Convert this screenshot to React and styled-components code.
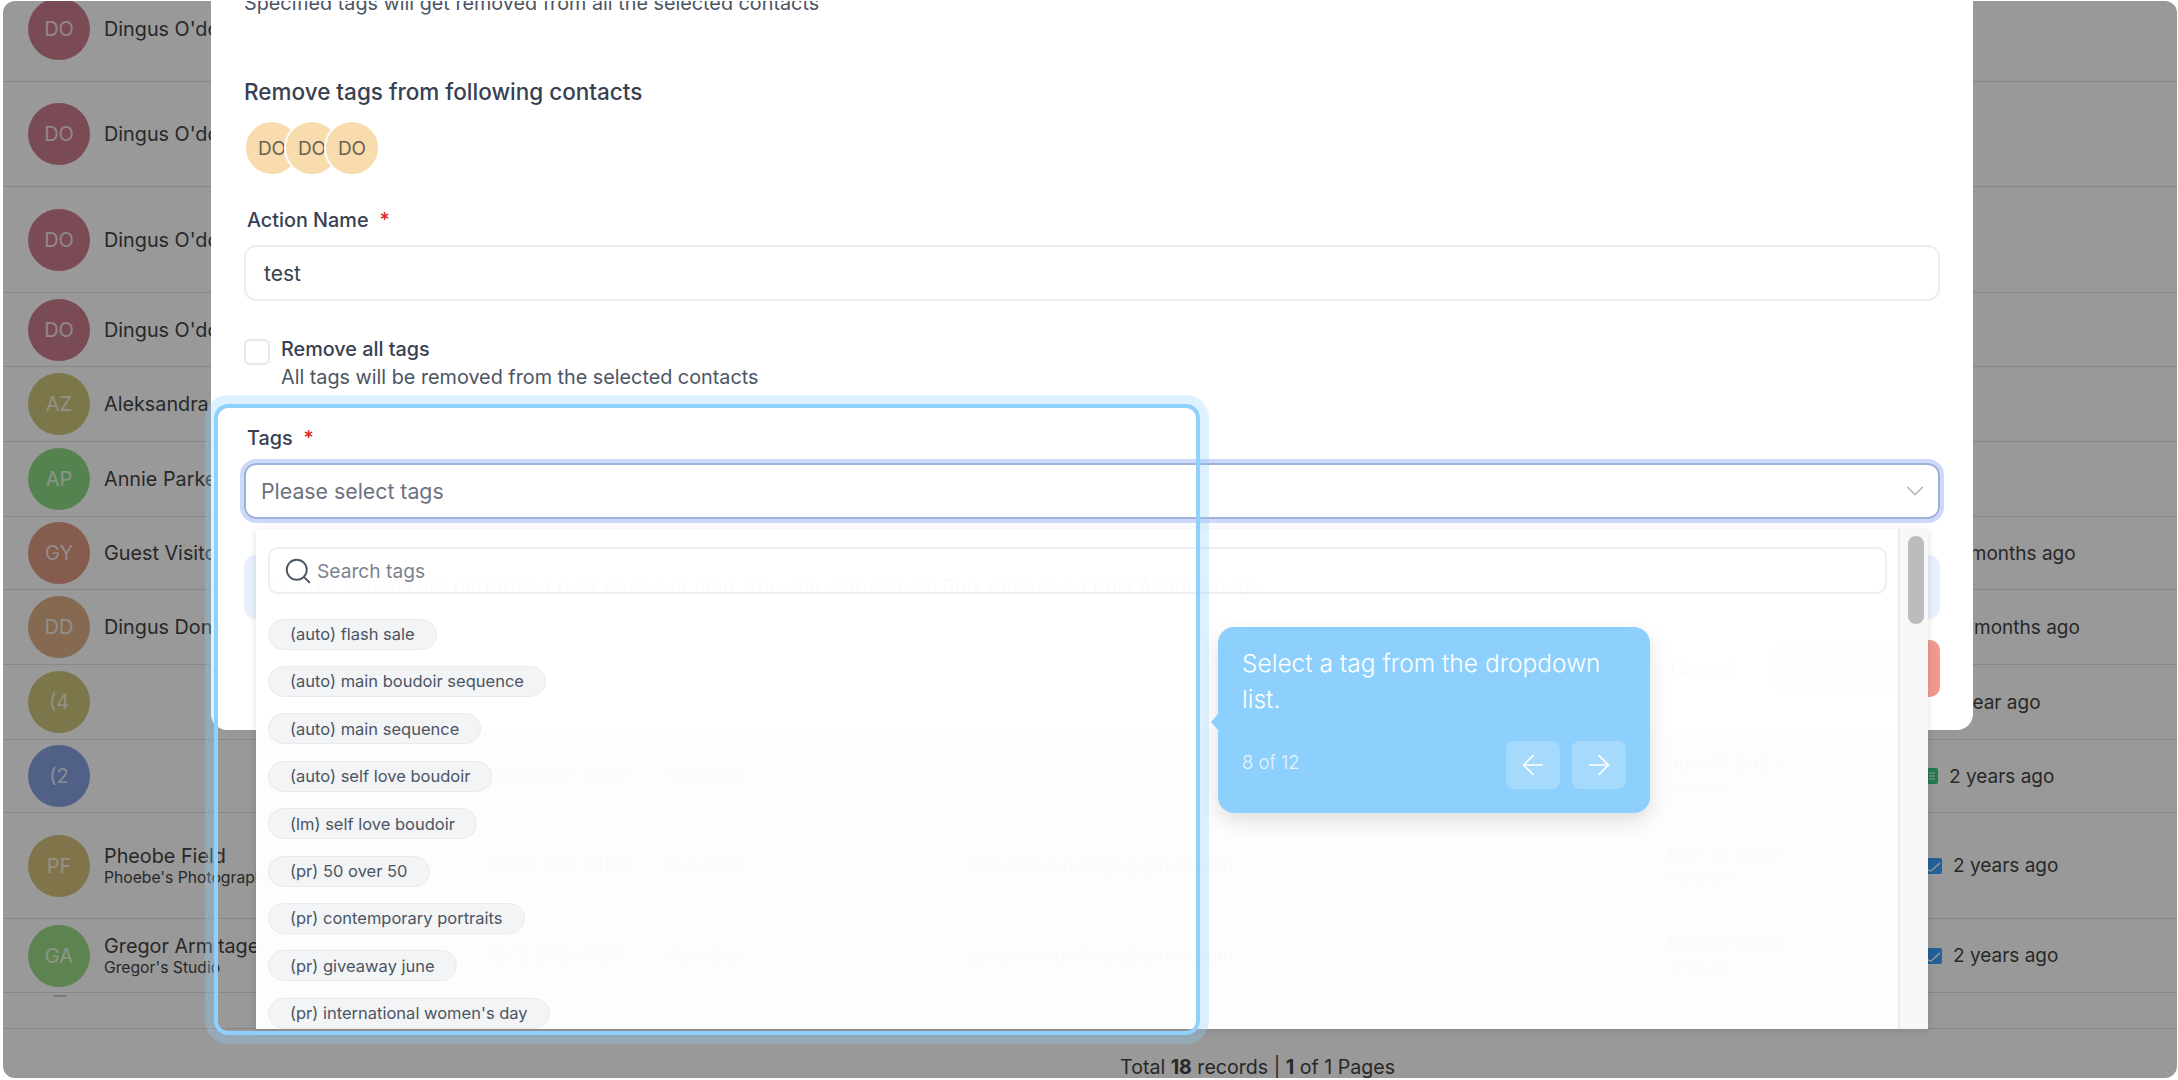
import React from 'react';
import styled, { createGlobalStyle } from 'styled-components';
import { ArrowLeft, ArrowRight, ChevronDown, Info, Search } from 'lucide-react';

const GlobalStyle = createGlobalStyle`
    html, body {
        margin: 0;
        padding: 0;
        background: #fff;
        font-family: Inter, "Liberation Sans", sans-serif;
    }
    * { box-sizing: border-box; }
`;

const Frame = styled.div`
    position: relative;
    margin: 1px 1px 2px 3px;
    height: 1077px;
    overflow: hidden;
    border-radius: 12px;
    background: #fff;
`;

// the table is scrolled a bit, first row is cut by the top of the window
const Table = styled.div`
    margin-top: -25px;
`;

const Row = styled.div`
    display: grid;
    grid-template-columns: 459px 180px 301px 700px 258px 1fr;
    align-items: center;
    height: ${p => p.$height}px;
    padding-left: 25px;
    border-bottom: 1px solid #e2e2e2;
    color: #444;
    font-size: 19px;
`;

const Person = styled.div`
    display: flex;
    align-items: center;
    gap: 14px;
    white-space: nowrap;
`;

const Avatar = styled.div`
    width: 62px;
    height: 62px;
    flex: none;
    border-radius: 50%;
    background: ${p => p.$color};
    color: rgba(255, 255, 255, 0.8);
    font-size: 20px;
    display: flex;
    align-items: center;
    justify-content: center;
`;

const Names = styled.div`
    display: flex;
    flex-direction: column;
`;

const Name = styled.span`
    font-size: 19.8px;
    line-height: 24px;
`;

const Company = styled.span`
    font-size: 15.7px;
    line-height: 20px;
`;

const Dash = styled.div`
    width: 13px;
    height: 2px;
    margin: -30px 0 0 25px;
    background: #ccc;
`;

const Cell = styled.div`
    font-size: 19px;
    line-height: 24px;
    white-space: nowrap;
`;

const SubCell = styled.div`
    font-size: 15px;
    line-height: 22px;
    white-space: nowrap;
`;

const LastSeen = styled.div`
    display: flex;
    align-items: center;
    gap: 11px;
    white-space: nowrap;
`;

const SeenIcon = styled.svg`
    width: ${p => p.$width}px;
    height: 16px;
    flex: none;
`;

const Pager = styled.div`
    padding: 28px 0 0 335px;
    text-align: center;
    color: #444;
    font-size: 19.6px;
    line-height: 20px;
    b { font-weight: 700; }
`;

const Dim = styled.div`
    position: absolute;
    inset: 0;
    background: rgba(0, 0, 0, 0.4);
`;

const Modal = styled.div`
    position: absolute;
    left: 208px;
    top: 0;
    width: 1762px;
    height: 729px;
    padding: 0 33px;
    overflow: hidden;
    background: #fff;
    border-radius: 0 0 16px 16px;
    color: #374151;
`;

const Subtitle = styled.p`
    margin: -10px 0 0;
    font-size: 19.8px;
    line-height: 24px;
    color: #4b5563;
`;

const Heading = styled.h3`
    margin: 63px 0 0;
    font-size: 22.5px;
    line-height: 28px;
    font-weight: 500;
`;

const AvatarStack = styled.div`
    display: flex;
    margin-top: 14px;
`;

const SmallAvatar = styled.div`
    width: 56px;
    height: 56px;
    margin-right: -16px;
    border: 2px solid #fff;
    border-radius: 50%;
    background: #f9dcae;
    color: #6b6255;
    font-size: 19px;
    display: flex;
    align-items: center;
    justify-content: center;
`;

const Label = styled.label`
    display: block;
    margin-top: ${p => p.$top}px;
    padding-left: 3px;
    font-size: 19.8px;
    line-height: 24px;
    font-weight: 500;
    span {
        margin-left: 11px;
        color: #dc2626;
    }
`;

const Input = styled.div`
    height: 56px;
    margin-top: 13px;
    padding: 0 18px;
    border: 2px solid #eceef1;
    border-radius: 12px;
    font-size: 21px;
    display: flex;
    align-items: center;
`;

const CheckRow = styled.div`
    display: flex;
    gap: 11px;
    margin-top: 36px;
`;

const Checkbox = styled.div`
    width: 26px;
    height: 26px;
    margin-top: 2px;
    border: 2px solid #e5e7eb;
    border-radius: 6px;
`;

const CheckTitle = styled.div`
    font-size: 19.8px;
    line-height: 24px;
    font-weight: 500;
`;

const CheckHint = styled.div`
    margin-top: 4px;
    font-size: 19.8px;
    line-height: 24px;
    color: #4b5563;
`;

const Select = styled.div`
    height: 56px;
    margin-top: 13px;
    padding: 0 8px 0 15px;
    border: 2px solid #9fb0da;
    border-radius: 12px;
    box-shadow: 0 0 0 4px #cdd9fa;
    color: #6b7280;
    font-size: 21.3px;
    display: flex;
    align-items: center;
    justify-content: space-between;
`;

const InfoBox = styled.div`
    height: 64px;
    margin-top: 36px;
    padding: 0 24px;
    border-radius: 12px;
    background: #e7f0fc;
    color: #1e40af;
    font-size: 19.8px;
    display: flex;
    align-items: center;
    gap: 8px;
`;

const ModalFooter = styled.div`
    display: flex;
    align-items: center;
    justify-content: flex-end;
    gap: 38px;
    margin-top: 21px;
    font-size: 20px;
`;

const Confirm = styled.div`
    width: 166px;
    height: 57px;
    border-radius: 10px;
    background: #ef9a8f;
    color: #fff;
    display: flex;
    align-items: center;
    justify-content: center;
`;

const Dropdown = styled.div`
    position: absolute;
    left: 253px;
    top: 528px;
    width: 1672px;
    height: 500px;
    display: flex;
    background: rgba(255, 255, 255, 0.98);
    border-radius: 4px 4px 0 0;
    box-shadow: 0 2px 8px rgba(0, 0, 0, 0.12);
`;

const DropdownBody = styled.div`
    flex: 1;
    min-width: 0;
    padding: 18px 11px 0 12px;
    overflow: hidden;
`;

const SearchBox = styled.div`
    height: 47px;
    padding-left: 13px;
    border: 2px solid #eeeff1;
    border-radius: 10px;
    color: #4b5563;
    display: flex;
    align-items: center;
    gap: 4px;
`;

const SearchHint = styled.span`
    font-size: 19.2px;
    color: #7b8390;
`;

const TagList = styled.div`
    display: flex;
    flex-direction: column;
    align-items: flex-start;
    gap: 16.4px;
    margin-top: 24.6px;
`;

const Tag = styled.div`
    height: 31px;
    padding: 0 21px;
    border: 1px solid #e8eaee;
    border-radius: 16px;
    background: #f3f4f6;
    color: #4b5563;
    font-size: 16.5px;
    display: flex;
    align-items: center;
    white-space: nowrap;
`;

const ScrollTrack = styled.div`
    width: 30px;
    flex: none;
    padding: 7px 0 0 8px;
    background: rgba(248, 248, 248, 0.97);
    border-left: 2px solid #ececec;
`;

const ScrollThumb = styled.div`
    width: 16px;
    height: 88px;
    border-radius: 8px;
    background: #bbb;
`;

const Highlight = styled.div`
    position: absolute;
    left: 211px;
    top: 403px;
    width: 986px;
    height: 631px;
    border: 4px solid #8fd0fd;
    border-radius: 14px;
    box-shadow: 0 0 0 9px rgba(143, 208, 253, 0.3);
    pointer-events: none;
`;

const Tooltip = styled.div`
    position: absolute;
    left: 1215px;
    top: 626px;
    width: 432px;
    height: 186px;
    padding: 18px 24px 24px 24px;
    border-radius: 16px;
    background: #8ed0fd;
    box-shadow: 0 8px 20px rgba(0, 0, 0, 0.12);
    color: #fff;
    display: flex;
    flex-direction: column;
    justify-content: space-between;
    &::before {
        content: '';
        position: absolute;
        left: -7px;
        top: 87px;
        border-style: solid;
        border-width: 8px 7px 8px 0;
        border-color: transparent #8ed0fd transparent transparent;
    }
`;

const TooltipText = styled.div`
    font-size: 24.5px;
    line-height: 36px;
    font-weight: 300;
`;

const TooltipFooter = styled.div`
    display: flex;
    align-items: center;
    justify-content: space-between;
`;

const Progress = styled.span`
    margin-top: -6px;
    font-size: 18.5px;
    font-weight: 300;
    color: rgba(255, 255, 255, 0.8);
`;

const NavButtons = styled.div`
    display: flex;
    gap: 12px;
`;

const NavButton = styled.div`
    width: 54px;
    height: 48px;
    border-radius: 8px;
    background: rgba(255, 255, 255, 0.22);
    display: flex;
    align-items: center;
    justify-content: center;
`;

const SheetIcon = () => (
    <SeenIcon $width={12} viewBox="0 0 12 16">
        <rect width="12" height="16" rx="2" fill="#40c880" />
        <path d="M3 5h6M3 8h6M3 11h6" stroke="#fff" strokeWidth="1" />
    </SeenIcon>
);

const CheckIcon = () => (
    <SeenIcon $width={16} viewBox="0 0 16 16">
        <rect width="16" height="16" rx="2" fill="#3aa0ff" />
        <path d="M2 12l3 1L14 5" stroke="#fff" strokeWidth="1.5" fill="none" />
    </SeenIcon>
);

const rows = [
    { height: 106, initials: 'DO', color: '#cc7c8e', name: "Dingus O'donnell" },
    { height: 105, initials: 'DO', color: '#cc7c8e', name: "Dingus O'donnell" },
    { height: 106, initials: 'DO', color: '#cc7c8e', name: "Dingus O'donnell" },
    { height: 74, initials: 'DO', color: '#cc7c8e', name: "Dingus O'donnell" },
    { height: 75, initials: 'AZ', color: '#cfc77e', name: 'Aleksandra Z' },
    { height: 75, initials: 'AP', color: '#8edb86', name: 'Annie Parker' },
    { height: 73, initials: 'GY', color: '#e09a84', name: 'Guest Visitor', seen: '11 months ago' },
    { height: 75, initials: 'DD', color: '#deb086', name: 'Dingus Donovan', seen: '10 months ago' },
    { height: 75, initials: '(4', color: '#cec67e', name: '', seen: '1 year ago' },
    {
        height: 73, initials: '(2', color: '#86a0df', name: '', phone: '(410) 242-8597', sub: 'Sub  Dial',
        date: 'Jun 07 2023', time: '12:15 pm', seen: '2 years ago', icon: <SheetIcon />,
    },
    {
        height: 106, initials: 'PF', color: '#d6c27e', name: 'Pheobe Field', company: "Phoebe's Photography",
        phone: '(570) 570-7400', sub: 'Sub  Dial', email: 'phoebeweddings@gmail.com',
        date: 'Mar 14 2022', time: '03:42 pm', seen: '2 years ago', icon: <CheckIcon />,
    },
    {
        height: 74, initials: 'GA', color: '#9bdc86', name: 'Gregor Armitage', company: "Gregor's Studio",
        phone: '(571) 965-6160', sub: 'Sub  Dial', email: 'gregorkirkpatrick@gmail.com',
        date: 'Mar 02 2022', time: '11:08 am', seen: '2 years ago', icon: <CheckIcon />,
    },
];

const tags = [
    '(auto) flash sale',
    '(auto) main boudoir sequence',
    '(auto) main sequence',
    '(auto) self love boudoir',
    '(lm) self love boudoir',
    '(pr) 50 over 50',
    '(pr) contemporary portraits',
    '(pr) giveaway june',
    "(pr) international women's day",
];

const App = () => {
    return (
        <Frame>
            <GlobalStyle />
            <Table>
                {rows.map((row, i) => (
                    <Row key={i} $height={row.height}>
                        <Person>
                            <Avatar $color={row.color}>{row.initials}</Avatar>
                            <Names>
                                <Name>{row.name}</Name>
                                {row.company && <Company>{row.company}</Company>}
                            </Names>
                        </Person>
                        <Cell>{row.phone}</Cell>
                        <Cell>{row.sub}</Cell>
                        <Cell>{row.email}</Cell>
                        <div>
                            <Cell>{row.date}</Cell>
                            <SubCell>{row.time}</SubCell>
                        </div>
                        <LastSeen>
                            {row.icon || <SeenIcon $width={12} />}
                            {row.seen}
                        </LastSeen>
                    </Row>
                ))}
                <Row $height={36}>
                    <Dash />
                </Row>
            </Table>
            <Pager>
                Total <b>18</b> records | <b>1</b> of 1 Pages
            </Pager>

            <Dim />

            <Modal>
                <Subtitle>Specified tags will get removed from all the selected contacts</Subtitle>
                <Heading>Remove tags from following contacts</Heading>
                <AvatarStack>
                    <SmallAvatar>DO</SmallAvatar>
                    <SmallAvatar>DO</SmallAvatar>
                    <SmallAvatar>DO</SmallAvatar>
                </AvatarStack>
                <Label $top={32}>Action Name<span>*</span></Label>
                <Input>test</Input>
                <CheckRow>
                    <Checkbox />
                    <div>
                        <CheckTitle>Remove all tags</CheckTitle>
                        <CheckHint>All tags will be removed from the selected contacts</CheckHint>
                    </div>
                </CheckRow>
                <Label $top={37}>Tags<span>*</span></Label>
                <Select>
                    Please select tags
                    <ChevronDown size={30} strokeWidth={1} color="#aab0b9" />
                </Select>
                <InfoBox>
                    <Info size={20} />
                    Bulk Actions are performed over period of time. You can stop/cancel Bulk Actions on Bulk Actions page
                </InfoBox>
                <ModalFooter>
                    Cancel
                    <Confirm>Remove tags</Confirm>
                </ModalFooter>
            </Modal>

            <Dropdown>
                <DropdownBody>
                    <SearchBox>
                        <Search size={30} strokeWidth={1.5} />
                        <SearchHint>Search tags</SearchHint>
                    </SearchBox>
                    <TagList>
                        {tags.map(tag => <Tag key={tag}>{tag}</Tag>)}
                    </TagList>
                </DropdownBody>
                <ScrollTrack>
                    <ScrollThumb />
                </ScrollTrack>
            </Dropdown>

            <Highlight />

            <Tooltip>
                <TooltipText>Select a tag from the dropdown list.</TooltipText>
                <TooltipFooter>
                    <Progress>8 of 12</Progress>
                    <NavButtons>
                        <NavButton><ArrowLeft size={32} strokeWidth={1.3} /></NavButton>
                        <NavButton><ArrowRight size={32} strokeWidth={1.3} /></NavButton>
                    </NavButtons>
                </TooltipFooter>
            </Tooltip>
        </Frame>
    );
};

export default App;
